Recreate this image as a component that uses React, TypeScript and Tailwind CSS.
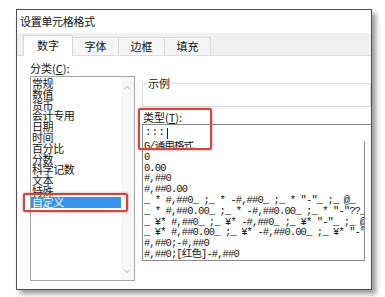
const categories = ['常规', '数值', '货币', '会计专用', '日期', '时间', '百分比', '分数', '科学记数', '文本', '特殊', '自定义'];

const formats = [
  'G/通用格式',
  '0',
  '0.00',
  '#,##0',
  '#,##0.00',
  '_ * #,##0_ ;_ * -#,##0_ ;_ * "-"_ ;_ @_ ',
  '_ * #,##0.00_ ;_ * -#,##0.00_ ;_ * "-"??_ ;_ @_ ',
  '_ ¥* #,##0_ ;_ ¥* -#,##0_ ;_ ¥* "-"_ ;_ @_ ',
  '_ ¥* #,##0.00_ ;_ ¥* -#,##0.00_ ;_ ¥* "-"??_ ;_ @_ ',
  '#,##0;-#,##0',
  '#,##0;[红色]-#,##0',
];

const tabs = ['数字', '字体', '边框', '填充'];

const Chevron = ({ up }: { up?: boolean }) => (
  <svg width="8" height="5" viewBox="0 0 8 5" className="text-[#b0b0b0]">
    <path d={up ? 'M1 4.5L4 1.5L7 4.5' : 'M1 0.5L4 3.5L7 0.5'} fill="none" stroke="currentColor" strokeWidth="1" />
  </svg>
);

export default function App() {
  return (
    <div className="w-[385px] h-[297px] bg-white overflow-hidden font-['Noto_Sans_CJK_SC',sans-serif] text-[#141414]">
      <div className="relative ml-[16px] mt-[9px] w-[356px] h-[281px] border border-[#4f4f4f] bg-white flex flex-col overflow-hidden shadow-[4px_4px_5px_rgba(0,0,0,0.4)]">
        <div className="h-[23px] flex items-center pl-[3px] text-[11px] tracking-[-0.3px]">设置单元格格式</div>

        <div className="h-[23px] bg-[#f0f0f0] border-b border-[#dcdcdc] flex items-end pl-[6px] text-[11px]">
          {tabs.map((t, i) =>
            i === 0 ? (
              <div key={t} className="w-[50px] h-[21px] -mb-px bg-white border border-b-0 border-[#d6d6d6] flex items-center justify-center pb-[1px]">
                {t}
              </div>
            ) : (
              <div key={t} className="w-[46px] h-[18px] border border-l-0 border-b-0 border-[#d9d9d9] bg-[#f5f5f5] flex items-center justify-center">
                {t}
              </div>
            )
          )}
        </div>

        <div className="flex-1 flex pl-[13px] text-[11px]">
          <div className="w-[110px] flex flex-col">
            <div className="mt-[5px] h-[15px] leading-[15px]">
              分类(<span className="underline">C</span>):
            </div>
            <div className="h-[205px] border border-[#a5a5a5] flex">
              <div className="w-[90px] leading-[10.8px] tracking-[-0.4px] pt-px">
                {categories.map((c, i) => (
                  <div key={c} className={i === categories.length - 1 ? 'bg-[#3593ee] text-white pl-px' : 'pl-px'}>
                    {c}
                  </div>
                ))}
              </div>
              <div className="flex-1 bg-[#f7f7f7] flex flex-col items-center justify-between pt-[8px] pb-[6px]">
                <Chevron up />
                <Chevron />
              </div>
            </div>
          </div>

          <div className="ml-[7px] w-[240px] flex flex-col">
            <fieldset className="mt-[20px] h-[31px] border border-[#dcdcdc] pl-[4px]">
              <legend className="px-[1px] leading-[14px]">示例</legend>
            </fieldset>
            <div className="mt-[3px] h-[14px] leading-[14px] pl-px">
              类型(<span className="underline">T</span>):
            </div>
            <div className="h-[17px] border-t border-l border-[#8a8a8a] flex items-center pl-[2px] font-['Liberation_Mono','Noto_Sans_CJK_SC',monospace] text-[10.5px]">
              <span className="tracking-[0.5px]">:::</span>
              <span className="w-px h-[11px] bg-[#222] ml-[2px]" />
            </div>
            <div className="h-[120px] w-[223px] border border-t-0 border-[#8a8a8a] overflow-hidden pl-px font-['Liberation_Mono','Noto_Sans_CJK_SC',monospace] text-[10.5px] tracking-[-0.9px] leading-[10.8px] whitespace-pre">
              {formats.map((f) => (
                <div key={f}>{f}</div>
              ))}
            </div>
          </div>
        </div>

        <div className="absolute left-[6px] top-[183px] w-[105px] h-[19px] border-2 border-[#d2453f] rounded-[2px] shadow-[0_0_3px_rgba(210,69,63,0.6)]" />
        <div className="absolute left-[121px] top-[98px] w-[74px] h-[42px] border-2 border-[#d2453f] rounded-[2px] shadow-[0_0_3px_rgba(210,69,63,0.6)]" />
      </div>
    </div>
  );
}
